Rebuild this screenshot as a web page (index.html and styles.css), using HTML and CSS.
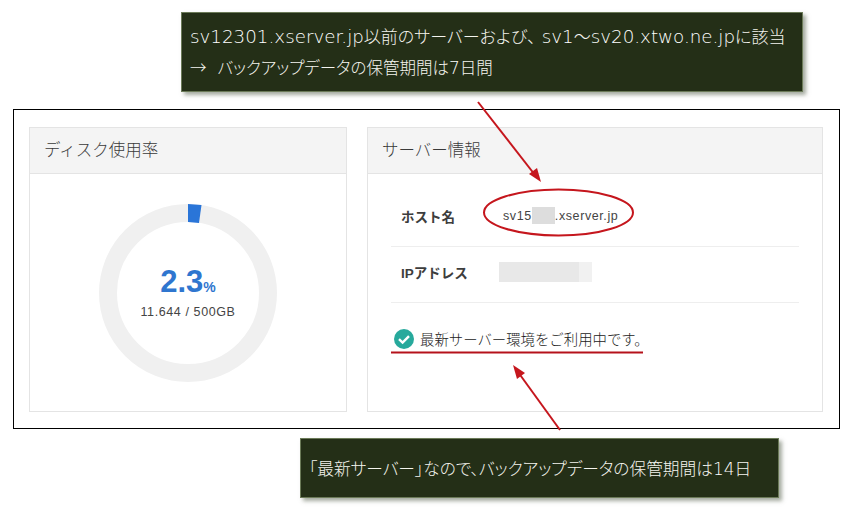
FILE: index.html
```html
<!DOCTYPE html>
<html lang="ja">
<head>
<meta charset="utf-8">
<title>サーバー情報</title>
<link rel="stylesheet" href="styles.css">
</head>
<body>
<div class="page">
  <div class="note note-top">
    <p><span class="latin">sv12301.xserver.jp</span>以前のサーバーおよび、<span class="latin gap-left">sv1</span>～<span class="latin">sv20.xtwo.ne.jp</span>に該当</p>
    <p class="note-line2">→&nbsp;&nbsp; バックアップデータの保管期間は<span class="latin">7</span>日間</p>
  </div>
  <div class="frame">
    <section class="card card-disk">
      <h2 class="card-head">ディスク使用率</h2>
      <div class="disk-body">
        <div class="donut">
          <svg class="donut-svg" width="178" height="178" viewBox="0 0 178 178">
            <circle cx="89" cy="89" r="80" fill="none" stroke="#f0f0f0" stroke-width="18"/>
            <path d="M89 0 L102.5 1 L100 19 L89 18 Z" fill="#2a75d8"/>
          </svg>
          <div class="donut-text">
            <div class="pct">2.3<span class="pct-unit">%</span></div>
            <div class="usage">11.644 / 500GB</div>
          </div>
        </div>
      </div>
    </section>
    <section class="card card-info">
      <h2 class="card-head">サーバー情報</h2>
      <div class="info-body">
        <div class="row">
          <div class="row-label">ホスト名</div>
          <div class="row-value">sv15<span class="mask-host"></span>.xserver.jp</div>
        </div>
        <div class="row">
          <div class="row-label">IPアドレス</div>
          <div class="mask-ip"><span class="mask-ip-a"></span><span class="mask-ip-b"></span></div>
        </div>
        <div class="status">
          <svg class="check" width="20" height="20" viewBox="0 0 20 20">
            <circle cx="10" cy="10" r="10" fill="#27a99c"/>
            <path d="M5 10.2 L8.6 13.6 L15 7.2" fill="none" stroke="#fff" stroke-width="2.4"/>
          </svg>
          <span>最新サーバー環境をご利用中です。</span>
        </div>
      </div>
    </section>
  </div>
  <div class="note note-bottom">
    <p>「最新サーバー」なので、バックアップデータの保管期間は<span class="latin">14</span>日</p>
  </div>
  <svg class="marks" width="854" height="508" viewBox="0 0 854 508">
    <g fill="none" stroke="#c5161d" stroke-width="2">
      <path d="M478 102 L535 175"/>
      <path d="M560 430 L518 372"/>
      <ellipse cx="558.500" cy="212.500" rx="74.500" ry="23"/>
    </g>
    <path d="M391 352.500 H643" stroke="#b5121b" stroke-width="2.200" fill="none"/>
    <path d="M541 182 L529 174 L537 168 Z" fill="#c5161d"/>
    <path d="M513 365 L525 373 L517 379 Z" fill="#c5161d"/>
  </svg>
</div>
</body>
</html>
```
FILE: styles.css
```css
* { box-sizing: border-box; }
html, body { margin: 0; padding: 0; background: #fff; }
.page {
  position: relative;
  width: 854px;
  height: 508px;
  padding-top: 12px;
  overflow: hidden;
  font-family: "Liberation Sans", "Noto Sans CJK JP", sans-serif;
  color: #444;
}
p { margin: 0; }
.note {
  background: #242f17;
  border: 1px solid #6b7a58;
  box-shadow: 3px 3px 4px rgba(90, 100, 80, .55);
  color: #f4f4ee;
  font-family: "Noto Sans CJK JP", sans-serif;
  font-size: 17px;
  font-feature-settings: "palt";
  font-weight: 300;
  white-space: nowrap;
}
.latin {
  font-family: "DejaVu Sans", sans-serif;
  font-size: 18.300px;
  font-weight: 300;
  color: #fff;
}
.gap-left { margin-left: 6px; }
.note-line2 { font-size: 16.500px; }
.note-line2 .latin { font-size: 17px; }
.note-top {
  width: 622px;
  height: 80px;
  margin-left: 181px;
  padding: 8px 8px;
  line-height: 30px;
}
.note-bottom {
  width: 479px;
  height: 60px;
  margin: 9px 0 0 300px;
  padding: 0 8px;
  font-size: 16.700px;
  line-height: 58px;
}
.note-bottom .latin { font-size: 17px; }
.frame {
  display: flex;
  gap: 20px;
  width: 827px;
  height: 320px;
  margin: 17px 0 0 13px;
  padding: 17px 16px 16px 15px;
  border: 1px solid #000;
  background: #fff;
}
.card {
  border: 1px solid #e4e4e4;
  background: #fff;
}
.card-disk { width: 318px; }
.card-info { width: 456px; }
.card-head {
  margin: 0;
  height: 46px;
  padding: 0 14px;
  background: #f4f4f4;
  border-bottom: 1px solid #e4e4e4;
  font-size: 16.500px;
  font-weight: 300;
  line-height: 44px;
  color: #3a3a3a;
}
.disk-body {
  display: flex;
  justify-content: center;
  padding-top: 30px;
}
.donut {
  position: relative;
  width: 178px;
  height: 178px;
}
.donut-svg { display: block; }
.donut-text {
  position: absolute;
  inset: 0;
  display: flex;
  flex-direction: column;
  align-items: center;
  padding-top: 62px;
}
.pct {
  font-size: 31px;
  font-weight: 700;
  line-height: 32px;
  color: #2f76cf;
}
.pct-unit { font-size: 14px; }
.usage {
  margin-top: 1px;
  font-size: 12.500px;
  letter-spacing: .6px;
  line-height: 16px;
  color: #444;
}
.info-body { padding: 17px 23px 0; }
.row {
  display: flex;
  align-items: center;
  height: 56px;
  padding: 0 0 6px 10px;
  border-bottom: 1px solid #eee;
}
.row-label {
  width: 98px;
  font-size: 13.500px;
  font-weight: 700;
  color: #3d3d3d;
}
.row-value {
  display: flex;
  align-items: center;
  font-size: 12.500px;
  letter-spacing: .6px;
  color: #444;
  margin-left: 4px;
}
.mask-host {
  width: 23px;
  height: 17px;
  background: #ddd;
}
.mask-ip { display: flex; height: 20px; }
.mask-ip-a { width: 80px; background: #e8e8e8; }
.mask-ip-b { width: 13px; background: #f1f1f1; }
.status {
  display: flex;
  align-items: center;
  gap: 6px;
  margin-top: 25px;
  padding-left: 3px;
  font-size: 14.400px;
  font-weight: 300;
  color: #222;
}
.check { display: block; flex: none; }
.marks {
  position: absolute;
  top: 0;
  left: 0;
  pointer-events: none;
}
```
